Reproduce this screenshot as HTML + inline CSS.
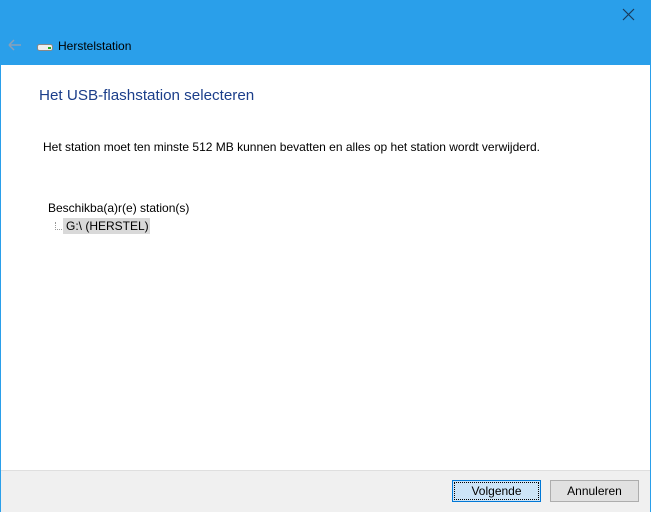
<html><head><style>
body{margin:0;width:651px;height:512px;overflow:hidden;background:#2a9fea;font-family:"Liberation Sans",sans-serif;font-size:12px;color:#000;position:relative}
.w{position:absolute;left:1px;top:65px;width:649px;height:446px;background:#fff}
.f{position:absolute;left:1px;top:470px;width:649px;height:41px;background:#f0f0f0;border-top:1px solid #dfdfdf}
.t{position:absolute;white-space:nowrap}
.b{position:absolute;top:480px;height:20px;width:87px;border:1px solid #adadad;background:#e1e1e1;text-align:center;line-height:20px;font-size:12px}
</style></head><body>
<svg class="t" style="left:622px;top:8px" width="14" height="14"><path d="M1 1L12 12M12 1L1 12" stroke="#1a3a5a" stroke-width="1.2"/></svg>
<svg class="t" style="left:8px;top:39px" width="14" height="12"><path d="M1 6H13M1 6L6 1M1 6L6 11" stroke="#8aa0b8" stroke-width="1.5" fill="none"/></svg>
<svg class="t" style="left:37px;top:42px" width="17" height="10"><rect x="0.5" y="2.5" width="15" height="6" rx="2" fill="#eee" stroke="#888"/><rect x="11" y="5" width="3" height="2" fill="#2a2"/></svg>
<div class="t" style="left:58px;top:39px;font-size:12px;color:#000">Herstelstation</div>
<div class="w"></div>
<div class="t" style="left:39px;top:87px;font-size:15.2px;color:#1b3e8a">Het USB-flashstation selecteren</div>
<div class="t" style="left:43px;top:140px">Het station moet ten minste 512 MB kunnen bevatten en alles op het station wordt verwijderd.</div>
<div class="t" style="left:48px;top:201px">Beschikba(a)r(e) station(s)</div>
<div class="t" style="left:55px;top:222px;width:8px;height:7px;border-left:1px dotted #999;border-bottom:1px dotted #999"></div>
<div class="t" style="left:63px;top:218px;width:87px;height:16px;background:#d9d9d9"></div>
<div class="t" style="left:66px;top:219px">G:\ (HERSTEL)</div>
<div class="f"></div>
<div class="b" style="left:452px;background:#cce4f7;border-color:#0078d7"><span style="display:block;margin:1px;border:1px dotted #000;line-height:16px">Volgende</span></div>
<div class="b" style="left:550px">Annuleren</div>
</body></html>
